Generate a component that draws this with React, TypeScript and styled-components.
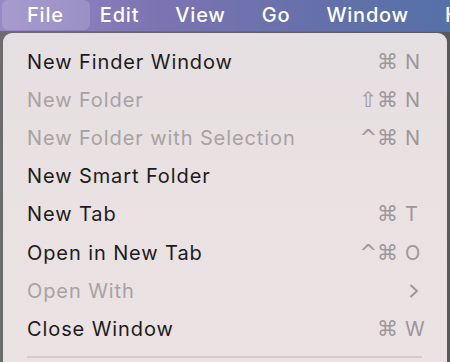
import styled, { createGlobalStyle } from "styled-components";

const GlobalStyle = createGlobalStyle`
  html, body {
    margin: 0;
    padding: 0;
    background: #5e5a5c;
  }
  body {
    font-family: Inter, "Noto Sans", "Liberation Sans", sans-serif;
    -webkit-font-smoothing: antialiased;
  }
`;

interface Item {
  label: string;
  mods?: string;
  keyName?: string;
  disabled?: boolean;
  submenu?: boolean;
}

const items: Item[] = [
  { label: "New Finder Window", mods: "⌘", keyName: "N" },
  { label: "New Folder", mods: "⇧⌘", keyName: "N", disabled: true },
  { label: "New Folder with Selection", mods: "^⌘", keyName: "N", disabled: true },
  { label: "New Smart Folder" },
  { label: "New Tab", mods: "⌘", keyName: "T" },
  { label: "Open in New Tab", mods: "^⌘", keyName: "O" },
  { label: "Open With", disabled: true, submenu: true },
  { label: "Close Window", mods: "⌘", keyName: "W" },
];

const menus = ["File", "Edit", "View", "Go", "Window", "Help"];

const Screen = styled.div`
  width: 450px;
  height: 362px;
  overflow: hidden;
  display: flex;
  flex-direction: column;
  background: linear-gradient(90deg, #6d6b6d 0%, #5a585a 100%);
`;

const MenuBar = styled.div`
  height: 31px;
  flex-shrink: 0;
  display: flex;
  align-items: center;
  gap: 36px;
  padding-left: 27px;
  background: linear-gradient(90deg, #9888c4 0%, #7c74b2 35%, #6570aa 70%, #5670a8 100%);
  border-bottom: 1px solid #c0445e;
  white-space: nowrap;
`;

const BarItem = styled.span<{ $active?: boolean }>`
  position: relative;
  color: #ffffff;
  font-size: 20px;
  font-weight: 500;
  letter-spacing: 0.8px;
  line-height: 31px;

  &::before {
    content: "";
    display: ${(p) => (p.$active ? "block" : "none")};
    position: absolute;
    left: -25px;
    right: -26px;
    top: 0;
    bottom: 1px;
    border-radius: 6px;
    background: rgba(255, 255, 255, 0.16);
  }
`;

const BarLabel = styled.span`
  position: relative;
`;

const Menu = styled.div`
  flex: 1;
  margin: 1px 3px 0 3px;
  border-radius: 9px 9px 0 0;
  padding: 10px 25px 0 24px;
  background: linear-gradient(180deg, #e6dfe1 0%, #e9e1e2 50%, #ebe2e3 100%);
`;

const Row = styled.div<{ $disabled?: boolean }>`
  height: 38.1px;
  display: flex;
  align-items: center;
  font-size: 20px;
  letter-spacing: 0.9px;
  color: ${(p) => (p.$disabled ? "#a7a2a4" : "#1d1b1c")};
`;

const Label = styled.span`
  flex: 1;
`;

const Shortcut = styled.span`
  display: flex;
  align-items: center;
  color: #9c9799;
  font-size: 20px;
  letter-spacing: 0;
`;

const Mods = styled.span`
  font-family: "DejaVu Sans", sans-serif;
  font-size: 21px;
  letter-spacing: 0;
`;

const KeyName = styled.span`
  width: 17px;
  margin-left: 7px;
  text-align: left;
  font-family: Inter, "Noto Sans", sans-serif;
  font-weight: 400;
`;

const Chevron = styled.svg`
  width: 12px;
  height: 14px;
  margin-right: 2px;
`;

const Separator = styled.div`
  height: 2px;
  margin: 8px 0 0 0;
  background: #d3cbcd;
`;

export default function App() {
  return (
    <>
      <GlobalStyle />
      <Screen>
        <MenuBar>
          {menus.map((m, i) => (
            <BarItem key={m} $active={i === 0}>
              <BarLabel>{m}</BarLabel>
            </BarItem>
          ))}
        </MenuBar>
        <Menu>
          {items.map((it) => (
            <Row key={it.label} $disabled={it.disabled}>
              <Label>{it.label}</Label>
              {it.keyName && (
                <Shortcut>
                  <Mods>{it.mods}</Mods>
                  <KeyName>{it.keyName}</KeyName>
                </Shortcut>
              )}
              {it.submenu && (
                <Chevron viewBox="0 0 12 14">
                  <path
                    d="M3 1.5 L9 7 L3 12.5"
                    fill="none"
                    stroke="#9c9799"
                    strokeWidth="2"
                    strokeLinecap="round"
                    strokeLinejoin="round"
                  />
                </Chevron>
              )}
            </Row>
          ))}
          <Separator />
        </Menu>
      </Screen>
    </>
  );
}
